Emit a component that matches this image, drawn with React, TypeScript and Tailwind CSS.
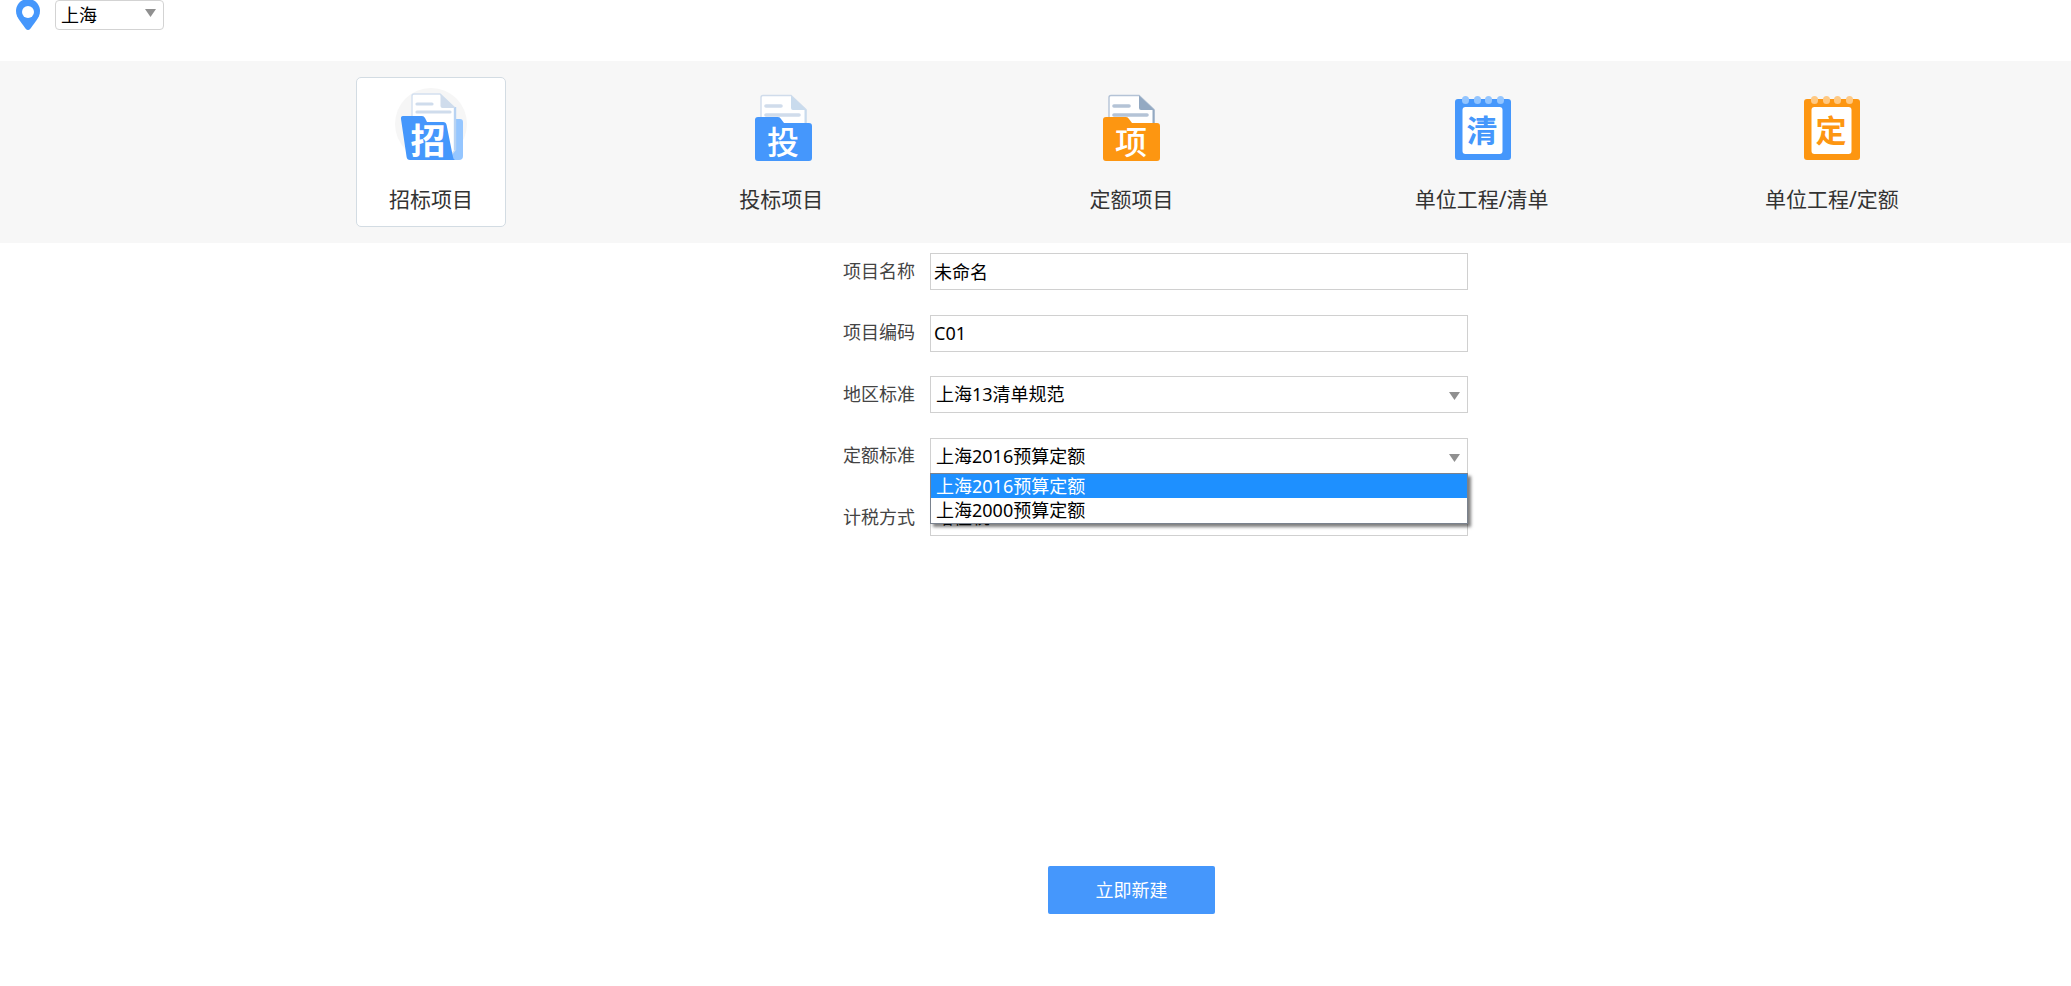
import { useState, type ReactNode } from 'react';

const BLUE = '#4597fc';
const ORANGE = '#fd9611';

const GLYPH_FONT = '"Noto Sans CJK SC", sans-serif';

function Glyph({ x, y, size = 32, fill = '#fff', bold = false, children }: { x: number; y: number; size?: number; fill?: string; bold?: boolean; children: string }) {
  return (
    <text x={x} y={y} fill={fill} fontSize={size} fontWeight={bold ? 700 : 500} textAnchor="middle" fontFamily={GLYPH_FONT}>
      {children}
    </text>
  );
}

function OpenFolderIcon() {
  return (
    <svg viewBox="0 0 72 76" className="h-[76px] w-[72px]" aria-hidden="true">
      <circle cx="36" cy="37" r="36" fill="#f6f6f6" />
      <rect x="0" y="73" width="72" height="3" fill="#fff" />
      <path d="M59 32h6q3 0 3 3v34q0 4-4 4H53z" fill="#95c6ff" />
      <path d="M19 7h26l15 14v42l-6 8H17V9q0-2 2-2z" fill="#fff" stroke="#d3e0f0" strokeWidth="1.4" />
      <path d="M60 20v43" stroke="#b9d3f2" strokeWidth="2.4" />
      <path d="M45.5 7 60.500 21H47.500q-2 0-2-2z" fill="#cfdcec" />
      <path d="M22 17h15M22 25h33" stroke="#cfdcec" strokeWidth="3.2" strokeLinecap="round" />
      <path d="M8 29h19q2 0 3 2l2 4h16q3 0 3.600 3l6.400 32q.5 3 2 3H15q-3 0-3.400-3L6 32q-.4-3 2-3z" fill={BLUE} />
      <Glyph x={33} y={67} size={35} bold>招</Glyph>
    </svg>
  );
}

function FolderIcon({ color, fold, line, glyph, shift = 0 }: { color: string; fold: string; line: string; glyph: string; shift?: number }) {
  return (
    <svg viewBox={`${shift} 0 72 76`} className="h-[76px] w-[72px]" aria-hidden="true">
      <path d="M18 8.500h28l15 14V40H16V10.500q0-2 2-2z" fill="#fff" stroke={line} strokeWidth="1.4" />
      <path d="M46 8.500 61.500 23v14h-2V23H48q-2 0-2-2z" fill={fold} />
      <path d="M21 19h15M21 28h33" stroke={line} strokeWidth="3.6" strokeLinecap="round" />
      <path d="M13 30h20q2 0 3 2l3 4h25q3 0 3 3v32q0 3-3 3H13q-3 0-3-3V33q0-3 3-3z" fill={color} />
      <Glyph x={38} y={67}>{glyph}</Glyph>
    </svg>
  );
}

function PadIcon({ color, ring, glyph, shift = 0 }: { color: string; ring: string; glyph: string; shift?: number }) {
  return (
    <svg viewBox={`${shift} 0 72 76`} className="h-[76px] w-[72px]" aria-hidden="true">
      <rect x="10" y="12" width="56" height="61" rx="3" fill={color} />
      <rect x="17.5" y="20" width="40" height="47" rx="3" fill="#fff" />
      {[20, 32, 43, 55].map((x) => (
        <rect key={x} x={x - 3} y="9" width="7" height="8" rx="3.5" fill={ring} />
      ))}
      <Glyph x={37} y={55} size={31} fill={color} bold>{glyph}</Glyph>
    </svg>
  );
}

const kinds: { name: string; icon: ReactNode }[] = [
  { name: '招标项目', icon: <OpenFolderIcon /> },
  { name: '投标项目', icon: <FolderIcon color={BLUE} fold="#c9dbed" line="#d0dceb" glyph="投" /> },
  { name: '定额项目', icon: <FolderIcon color={ORANGE} fold="#93a9c2" line="#b4c3d6" glyph="项" shift={2} /> },
  { name: '单位工程/清单', icon: <PadIcon color={BLUE} ring="#93c5ff" glyph="清" shift={1} /> },
  { name: '单位工程/定额', icon: <PadIcon color={ORANGE} ring="#ffc983" glyph="定" shift={2} /> },
];

function Arrow({ className }: { className: string }) {
  return (
    <svg viewBox="0 0 11 8" className={`pointer-events-none absolute h-2 w-[11px] ${className}`} aria-hidden="true">
      <path d="M0 0h11L5.5 8z" fill="#909090" />
    </svg>
  );
}

const boxClass = 'h-[37px] w-full rounded-none border border-[#d0d0d0] bg-white pb-px text-lg text-black outline-none';

function Field({ id, label, children }: { id: string; label: string; children: ReactNode }) {
  return (
    <div className="flex items-center gap-[15px]">
      <label htmlFor={id} className="w-[120px] pb-0.5 text-right text-lg text-[#444]">{label}</label>
      <div className="relative flex-1">{children}</div>
    </div>
  );
}

function SelectBox({ id, options, value, onChange }: { id: string; options: string[]; value?: string; onChange?: (v: string) => void }) {
  return (
    <>
      <select id={id} value={value} onChange={(e) => onChange?.(e.target.value)} className={`${boxClass} appearance-none px-[5px]`}>
        {options.map((o) => <option key={o}>{o}</option>)}
      </select>
      <Arrow className="right-2 top-4" />
    </>
  );
}

const quotas = ['上海2016预算定额', '上海2000预算定额'];

export default function App() {
  const [kind, setKind] = useState('招标项目');
  const [quota, setQuota] = useState(quotas[0]);

  return (
    <div className="min-h-screen bg-white font-['Noto_Sans','Noto_Sans_CJK_SC',sans-serif] text-[#333]">
      <header className="flex h-[61px] items-start pl-4">
        <svg viewBox="0 0 24 31" className="h-[31px] w-6" aria-hidden="true">
          <path d="M12-1C5 -1 0 4.500 0 11c0 4 1.500 6.500 4 10l5.500 7.500q2.500 3 5 0L20 21c2.500-3.500 4-6 4-10C24 4.500 19-1 12-1z" fill={BLUE} />
          <circle cx="12" cy="12" r="6" fill="#fff" />
        </svg>
        <div className="relative ml-[15px] w-[109px]">
          <select aria-label="地区" className="h-[30px] w-full appearance-none rounded border border-[#d3d3d3] bg-white px-[5px] pb-px text-lg text-black outline-none">
            <option>上海</option>
          </select>
          <Arrow className="right-2 top-[9px]" />
        </div>
      </header>

      <nav className="grid grid-cols-5 justify-items-center bg-[#f7f7f7] py-4 pl-[256px] pr-16">
        {kinds.map(({ name, icon }) => (
          <button
            key={name}
            type="button"
            onClick={() => setKind(name)}
            className={`flex h-[150px] w-[150px] flex-col items-center gap-5 rounded-[5px] border pt-[9px] ${kind === name ? 'border-[#d3dce3] bg-white' : 'border-transparent'}`}
          >
            {icon}
            <span className="whitespace-nowrap text-[21px] leading-8">{name}</span>
          </button>
        ))}
      </nav>

      <form className="flex flex-col items-center pl-[256px] pr-16 pt-[10px]" onSubmit={(e) => e.preventDefault()}>
        <div className="flex min-h-[283px] w-full max-w-[673px] flex-col justify-between">
          <Field id="name" label="项目名称">
            <input id="name" type="text" defaultValue="未命名" className={`${boxClass} px-[3px]`} />
          </Field>
          <Field id="code" label="项目编码">
            <input id="code" type="text" defaultValue="C01" className={`${boxClass} px-[3px]`} />
          </Field>
          <Field id="region" label="地区标准">
            <SelectBox id="region" options={['上海13清单规范']} />
          </Field>
          <Field id="quota" label="定额标准">
            <SelectBox id="quota" options={quotas} value={quota} onChange={setQuota} />
            <ul role="listbox" aria-label="定额标准" className="absolute inset-x-0 top-[35px] z-10 border border-[#7a828e] bg-white pb-px text-lg leading-6 text-black shadow-[3px_3px_3px_rgba(0,0,0,0.5)]">
              {quotas.map((q) => (
                <li
                  key={q}
                  role="option"
                  aria-selected={q === quota}
                  onClick={() => setQuota(q)}
                  className={`h-6 px-[5px] ${q === quota ? 'bg-[#1e90ff] text-white' : ''}`}
                >
                  {q}
                </li>
              ))}
            </ul>
          </Field>
          <Field id="tax" label="计税方式">
            <SelectBox id="tax" options={['增值税']} />
          </Field>
        </div>
        <button type="submit" className="mt-[330px] h-12 w-[167px] rounded-xs bg-[#4597fc] text-lg text-white">立即新建</button>
      </form>
    </div>
  );
}
